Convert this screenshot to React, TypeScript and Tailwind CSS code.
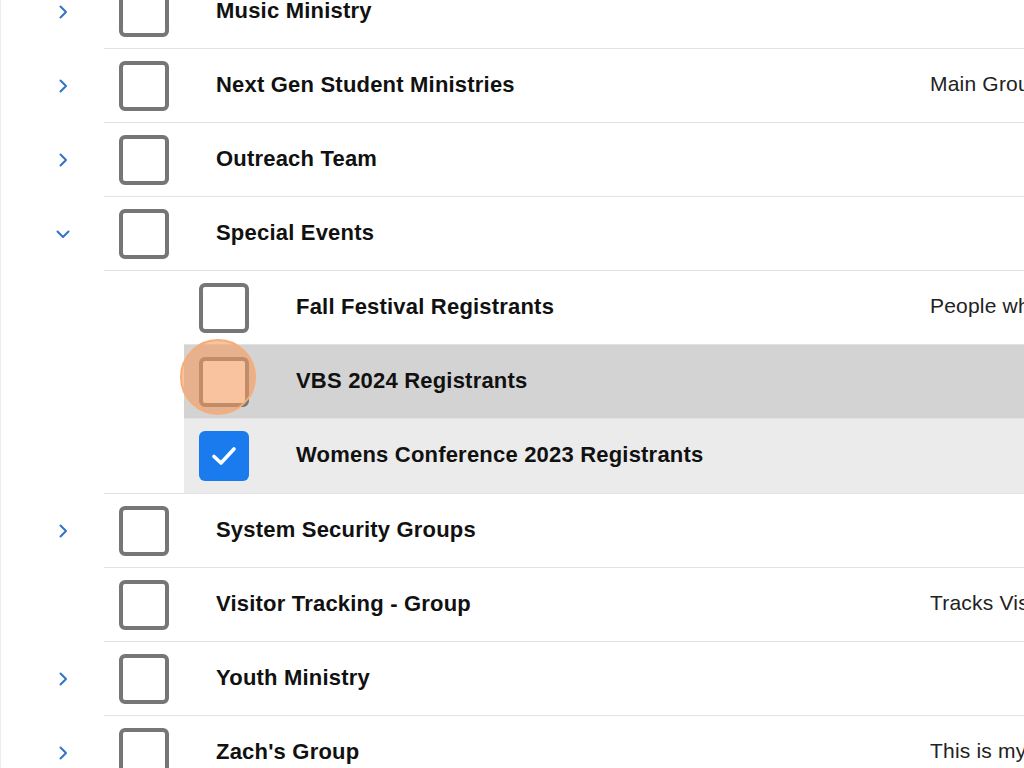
import React from "react";

type Group = {
  name: string;
  desc?: string;
  chevron?: "right" | "down";
};

type Child = {
  name: string;
  desc?: string;
  state: "none" | "hover" | "checked";
};

const FONT = { fontFamily: '"Liberation Sans", Arial, sans-serif' };

const Chevron = ({ dir }: { dir: "right" | "down" }) => (
  <svg width="14" height="14" viewBox="0 0 14 14" fill="none">
    {dir === "right" ? (
      <path d="M4.5 1.5 L10 7 L4.5 12.5" stroke="#2f74c8" strokeWidth="2" strokeLinecap="round" strokeLinejoin="round" />
    ) : (
      <path d="M1.5 4.5 L7 10 L12.5 4.5" stroke="#2f74c8" strokeWidth="2" strokeLinecap="round" strokeLinejoin="round" />
    )}
  </svg>
);

const Box = ({ checked }: { checked?: boolean }) =>
  checked ? (
    <div className="w-[50px] h-[50px] shrink-0 rounded-[6px] bg-[#1a7bef] flex items-center justify-center">
      <svg width="26" height="22" viewBox="0 0 26 22" fill="none">
        <path d="M3 11.5 L10 18 L23 4" stroke="#ffffff" strokeWidth="3.6" strokeLinecap="round" strokeLinejoin="round" />
      </svg>
    </div>
  ) : (
    <div className="w-[50px] h-[50px] shrink-0 rounded-[6px] border-4 border-[#767676] bg-white" />
  );

const GroupRow = ({ g }: { g: Group }) => (
  <div className="flex h-[74px]">
    <div className="w-[104px] shrink-0 flex items-center pl-[56px]">
      {g.chevron && <Chevron dir={g.chevron} />}
    </div>
    <div className="flex-1 flex items-center border-b border-[#e2e2e2] pl-[15px]">
      <Box />
      <div className="ml-[47px] w-[714px] shrink-0 text-[22px] tracking-[0.2px] font-bold text-[#111] whitespace-nowrap -mt-[3px]">
        {g.name}
      </div>
      <div className="text-[21px] tracking-[0.2px] text-[#222] whitespace-nowrap -mt-[3px]">{g.desc}</div>
    </div>
  </div>
);

const ChildRow = ({ c, last }: { c: Child; last?: boolean }) => {
  const bg =
    c.state === "hover" ? "bg-[#d3d3d3]" : c.state === "checked" ? "bg-[#ebebeb]" : "bg-white";
  return (
    <div className={`relative flex items-center h-[74px] pl-[15px] ${bg} ${last ? "" : "border-b border-[#e2e2e2]"}`}>
      <Box checked={c.state === "checked"} />
      <div className="ml-[47px] w-[634px] shrink-0 text-[22px] tracking-[0.2px] font-bold text-[#111] whitespace-nowrap -mt-[3px]">
        {c.name}
      </div>
      <div className="text-[21px] tracking-[0.2px] text-[#222] whitespace-nowrap -mt-[3px]">{c.desc}</div>
      {c.state === "hover" && (
        <div className="absolute left-[-4px] top-[-6px] w-[76px] h-[76px] rounded-full bg-[rgba(245,155,95,0.6)] border-2 border-[#f6ad78]" />
      )}
    </div>
  );
};

const before: Group[] = [
  { name: "Music Ministry", chevron: "right" },
  { name: "Next Gen Student Ministries", desc: "Main Group for Next Gen", chevron: "right" },
  { name: "Outreach Team", chevron: "right" },
  { name: "Special Events", chevron: "down" },
];

const children: Child[] = [
  { name: "Fall Festival Registrants", desc: "People who registered", state: "none" },
  { name: "VBS 2024 Registrants", state: "hover" },
  { name: "Womens Conference 2023 Registrants", state: "checked" },
];

const after: Group[] = [
  { name: "System Security Groups", chevron: "right" },
  { name: "Visitor Tracking - Group", desc: "Tracks Visitors" },
  { name: "Youth Ministry", chevron: "right" },
  { name: "Zach's Group", desc: "This is my group", chevron: "right" },
];

export default function App() {
  return (
    <div className="w-[1024px] h-[768px] overflow-hidden bg-white shadow-[inset_1px_0_0_#ececec]" style={FONT}>
      <div className="-mt-[25px]">
        {before.map((g) => (
          <GroupRow key={g.name} g={g} />
        ))}
        <div className="ml-[104px] border-b border-[#e2e2e2]">
          <div className="ml-[80px]">
            {children.map((c, i) => (
              <ChildRow key={c.name} c={c} last={i === children.length - 1} />
            ))}
          </div>
        </div>
        {after.map((g) => (
          <GroupRow key={g.name} g={g} />
        ))}
      </div>
    </div>
  );
}
